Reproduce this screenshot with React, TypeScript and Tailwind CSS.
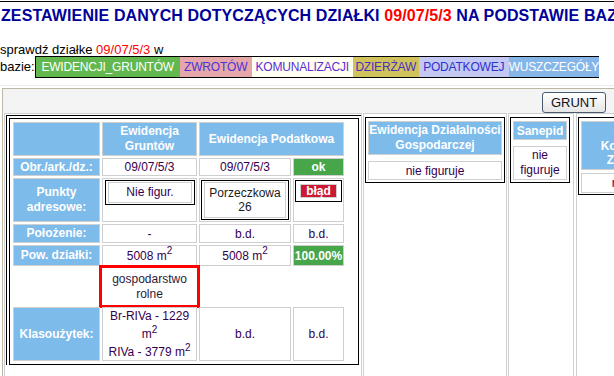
import React from 'react';

const blue = 'bg-[#7dbbeb] border border-[#cfcfcf] text-white font-bold';
const plain = 'border border-[#cfcfcf] bg-white text-[#35004f]';

const Label = ({ children }: { children: React.ReactNode }) => (
  <div className={`${blue} flex items-center justify-center text-center leading-[15px]`}>{children}</div>
);

const Value = ({ children }: { children?: React.ReactNode }) => (
  <div className={`${plain} flex items-center justify-center text-center leading-[14px]`}>{children}</div>
);

const Good = ({ children }: { children: React.ReactNode }) => (
  <div className="border border-[#cfcfcf] bg-[#47a54a] text-white font-bold flex items-center justify-center">{children}</div>
);

const M2 = () => (
  <>
    m<sup className="text-[10px]">2</sup>
  </>
);

const bases = [
  { name: 'EWIDENCJI_GRUNTÓW', cls: 'bg-[#62b84f] text-white w-[144px]' },
  { name: 'ZWROTÓW', cls: 'bg-[#e6a7aa] text-[#4a33d6] w-[72px]' },
  { name: 'KOMUNALIZACJI', cls: 'bg-[#fffff2] text-[#5b2fd8] w-[101px]' },
  { name: 'DZIERŻAW', cls: 'bg-[#d0c35c] text-[#4a2fc0] w-[66px]' },
  { name: 'PODATKOWEJ', cls: 'bg-[#c3c9f3] text-[#3030d0] w-[90px]' },
  { name: 'WUSZCZEGÓŁY', cls: 'bg-[#86b6e8] text-white w-[90px]' },
];

export default function App() {
  return (
    <div className="w-[614px] h-[376px] overflow-hidden bg-white font-['Liberation_Sans',Arial,sans-serif] text-[12px] text-black">
      <div className="mt-px h-px w-[614px] bg-black" />

      {/* Title */}
      <div className="mt-[5px] pl-px whitespace-nowrap text-[16px] font-bold leading-[18px] tracking-[0.1px] text-[#00009a]">
        ZESTAWIENIE DANYCH DOTYCZĄCYCH DZIAŁKI <span className="text-[#ff0000]">09/07/5/3</span> NA PODSTAWIE BAZY DANYCH
      </div>

      {/* Base selector */}
      <div className="mt-[19px] whitespace-nowrap text-[13px] leading-[12px]">
        sprawdź działke <span className="text-[#ff0000]">09/07/5/3</span> w
      </div>
      <div className="flex items-baseline whitespace-nowrap text-[13px]">
        <span>bazie:</span>
        <div className="flex border-y border-l border-black">
          {bases.map((b) => (
            <span
              key={b.name}
              className={`${b.cls} h-[20px] shrink-0 overflow-hidden text-center text-[12px] leading-[20px] tracking-[-0.2px]`}
            >
              {b.name}
            </span>
          ))}
        </div>
      </div>

      <div className="mt-[7px] h-px bg-[#ececec]" />

      {/* Frame */}
      <div className="mt-[2px] ml-[2px] w-[618px] border-l border-t border-[#bcb8a4]">
        <div className="flex h-[24px] justify-end bg-[#f4f4f4] pt-[3px] pr-[14px]">
          <button className="h-[21px] w-[64px] rounded-[3px] border border-[#4a5a6e] bg-gradient-to-b from-white to-[#e6e6e6] text-[13px] leading-[19px] text-[#101020]">
            GRUNT
          </button>
        </div>

        <div className="flex h-[270px] items-stretch gap-[1px] pl-[1px]">
          {/* Column 1 */}
          <div className="w-[358px] shrink-0 border border-[#cfcfcf] pl-px pt-px">
            <div className="border-l border-t border-black pl-[2px] pt-[2px]">
              <div className="w-[350px] border border-black p-[3px]">
                <div className="grid grid-cols-[87px_95px_92px_51px] grid-rows-[34px_18px_44px_19px_21px_37px_54px] gap-[2px]">
                  <div className={blue} />
                  <Label>
                    Ewidencja
                    <br />
                    Gruntów
                  </Label>
                  <div className={`${blue} col-span-2 flex items-center justify-center`}>Ewidencja Podatkowa</div>

                  <Label>Obr./ark./dz.:</Label>
                  <Value>09/07/5/3</Value>
                  <Value>09/07/5/3</Value>
                  <Good>ok</Good>

                  <Label>
                    Punkty
                    <br />
                    adresowe:
                  </Label>
                  <div className={`${plain} p-px`}>
                    <div className="ml-px border border-black px-[2px] py-px">
                      <div className="border border-[#cfcfcf] py-[2px] text-center leading-[15px]">Nie figur.</div>
                    </div>
                  </div>
                  <div className={`${plain} p-px`}>
                    <div className="border border-black px-[2px] py-px">
                      <div className="border border-[#cfcfcf] py-[3px] text-center leading-[14px] text-[#1a1a1a]">
                        Porzeczkowa
                        <br />
                        26
                      </div>
                    </div>
                  </div>
                  <div className={`${plain} p-px`}>
                    <div className="border border-black p-[3px]">
                      <div className="mx-auto w-[37px] border border-[#d0d0d0] bg-[#cc1a35] text-center font-bold leading-[12px] text-white">
                        błąd
                      </div>
                    </div>
                  </div>

                  <Label>Położenie:</Label>
                  <Value>-</Value>
                  <Value>b.d.</Value>
                  <Value>b.d.</Value>

                  <Label>Pow. działki:</Label>
                  <Value>
                    5008 <M2 />
                  </Value>
                  <Value>
                    5008 <M2 />
                  </Value>
                  <Good>100.00%</Good>

                  <div />
                  <div className="flex items-center justify-center bg-white text-center leading-[15px] text-[#2a1a3a] outline-[3px] outline-[#ff0000] outline-offset-[0px]">
                    gospodarstwo
                    <br />
                    rolne
                  </div>
                  <div />
                  <div />

                  <Label>Klasoużytek:</Label>
                  <div className={`${plain} flex flex-col items-center justify-center text-center leading-[18px]`}>
                    <span>Br-RIVa - 1229</span>
                    <span>
                      <M2 />
                    </span>
                    <span>
                      RIVa - 3779 <M2 />
                    </span>
                  </div>
                  <Value>b.d.</Value>
                  <Value>b.d.</Value>
                </div>
              </div>
            </div>
          </div>

          {/* Column 2 */}
          <div className="w-[144px] shrink-0 border border-[#cfcfcf] px-px pt-[3px]">
            <div className="flex w-[140px] flex-col gap-[6px] border border-black px-[2px] pt-[3px] pb-[2px]">
              <div className={`${blue} flex h-[34px] items-center justify-center text-center leading-[15px]`}>
                Ewidencja Działalności
                <br />
                Gospodarczej
              </div>
              <div className={`${plain} flex h-[19px] items-center justify-center`}>nie figuruje</div>
            </div>
          </div>

          {/* Column 3 */}
          <div className="w-[66px] shrink-0 border border-[#cfcfcf] pl-px pt-[3px]">
            <div className="flex w-[60px] flex-col gap-[6px] border border-black px-[2px] pt-[3px] pb-[2px]">
              <div className={`${blue} flex h-[19px] items-center justify-center`}>Sanepid</div>
              <div className={`${plain} flex h-[34px] items-center justify-center text-center leading-[15px]`}>
                nie
                <br />
                figuruje
              </div>
            </div>
          </div>

          {/* Column 4 */}
          <div className="ml-px w-[140px] shrink-0 border border-[#cfcfcf] pl-px pt-[3px]">
            <div className="flex w-[126px] flex-col gap-[3px] border border-black px-[2px] pt-[3px] pb-px">
              <div className={`${blue} flex h-[49px] items-center justify-center text-center leading-[14px]`}>
                Wydział
                <br />
                Komunalizacji
                <br />
                Zarządzania
              </div>
              <div className={`${plain} flex h-[20px] items-center justify-center`}>nie figuruje</div>
            </div>
          </div>
        </div>
      </div>
    </div>
  );
}
